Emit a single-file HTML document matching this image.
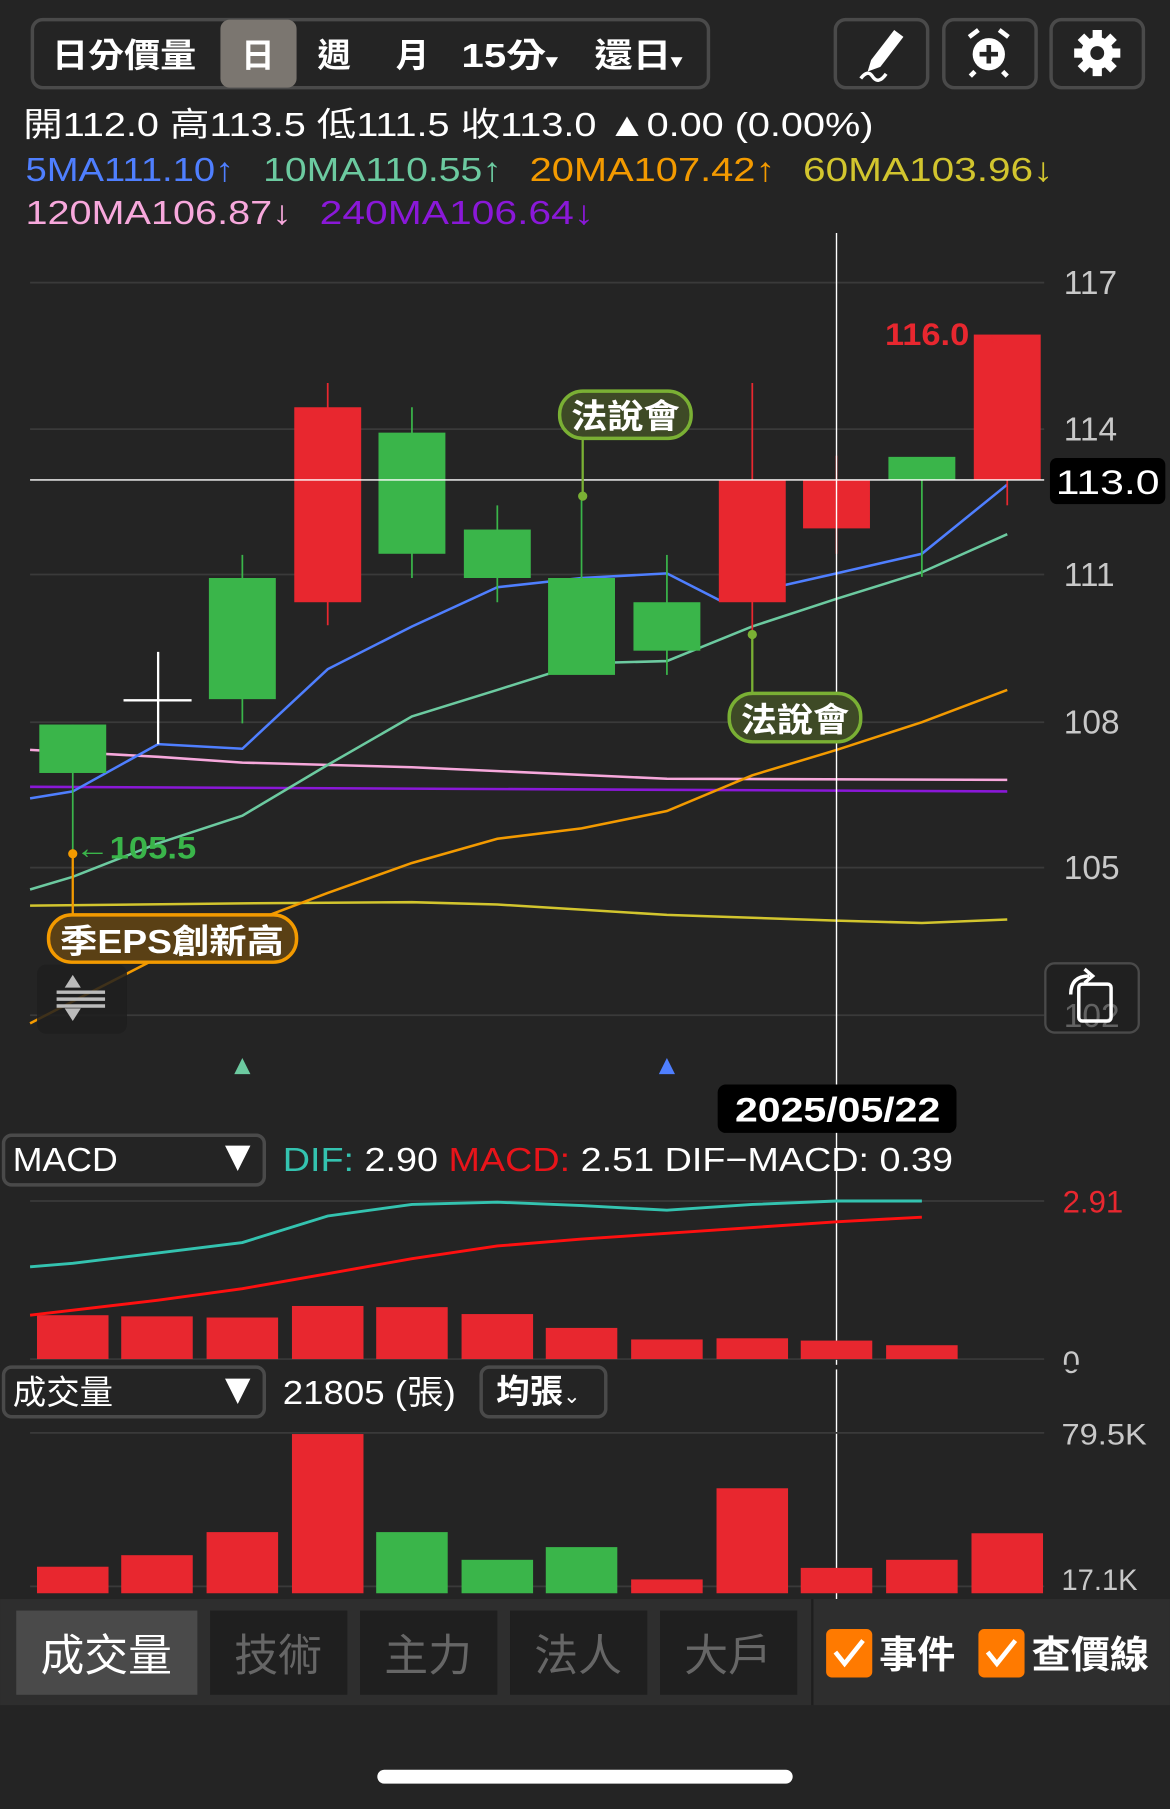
<!DOCTYPE html>
<html><head><meta charset="utf-8"><style>
html,body{margin:0;padding:0;background:#242424;width:1170px;height:1809px;overflow:hidden}
svg{display:block}
text{font-family:"Liberation Sans","Noto Sans CJK TC",sans-serif}
</style></head><body>
<svg width="1170" height="1809" viewBox="0 0 1014 1568" xmlns="http://www.w3.org/2000/svg">
<rect width="1014" height="1568" fill="#242424"/>
<!-- toolbar -->
<rect x="28" y="17" width="586" height="59" rx="9" fill="none" stroke="#4a4a4a" stroke-width="3"/>
<rect x="191" y="17" width="66" height="59" rx="8" fill="#7b7670"/>
<g fill="#fff" font-size="29" font-weight="bold">
<text x="45" y="58" textLength="125" lengthAdjust="spacingAndGlyphs">日分價量</text>
<text x="209" y="58">日</text>
<text x="275" y="58">週</text>
<text x="343" y="58">月</text>
<text x="400" y="58" textLength="83" lengthAdjust="spacingAndGlyphs">15分<tspan font-size="16">▾</tspan></text>
<text x="515" y="58" textLength="76" lengthAdjust="spacingAndGlyphs">還日<tspan font-size="16">▾</tspan></text>
</g>
<g fill="none" stroke="#4a4a4a" stroke-width="3">
<rect x="724" y="17" width="80" height="59" rx="9"/>
<rect x="818" y="17" width="80" height="59" rx="9"/>
<rect x="911" y="17" width="80" height="59" rx="9"/>
</g>
<path d="M755 52 L775 26 L783 32 L763 58 L752 62 Z" fill="#fff"/>
<path d="M746 68 q6 -8 10 -2 q5 8 12 -2" fill="none" stroke="#fff" stroke-width="3"/>
<circle cx="857" cy="47" r="14" fill="#fff"/>
<path d="M840 32 l8 -6 M874 32 l-8 -6 M845 62 l-4 4 M869 62 l4 4" stroke="#fff" stroke-width="4"/>
<path d="M857 39 v16 M849 47 h16" stroke="#242424" stroke-width="4"/>
<g transform="translate(951,46)">
<circle r="14" fill="#fff"/>
<g fill="#fff"><rect x="-4" y="-20" width="8" height="40"/><rect x="-4" y="-20" width="8" height="40" transform="rotate(45)"/><rect x="-4" y="-20" width="8" height="40" transform="rotate(90)"/><rect x="-4" y="-20" width="8" height="40" transform="rotate(135)"/></g>
<circle r="6" fill="#242424"/>
</g>
<!-- OHLC -->
<text x="20" y="118" fill="#fff" font-size="29" textLength="737" lengthAdjust="spacingAndGlyphs">開112.0 高113.5 低111.5 收113.0 ▲0.00 (0.00%)</text>
<g font-size="29">
<text x="22" y="157" fill="#4f7fff" textLength="181" lengthAdjust="spacingAndGlyphs">5MA111.10↑</text>
<text x="228" y="157" fill="#6ccaa0" textLength="207" lengthAdjust="spacingAndGlyphs">10MA110.55↑</text>
<text x="459" y="157" fill="#f39a00" textLength="213" lengthAdjust="spacingAndGlyphs">20MA107.42↑</text>
<text x="696" y="157" fill="#d2c52e" textLength="217" lengthAdjust="spacingAndGlyphs">60MA103.96↓</text>
<text x="22" y="194" fill="#f7a8dc" textLength="231" lengthAdjust="spacingAndGlyphs">120MA106.87↓</text>
<text x="277" y="194" fill="#8a18d8" textLength="238" lengthAdjust="spacingAndGlyphs">240MA106.64↓</text>
</g>
<!-- grid -->
<g stroke="#3a3a3a" stroke-width="1.5">
<line x1="26" y1="245" x2="905" y2="245"/><line x1="26" y1="372" x2="905" y2="372"/><line x1="26" y1="498" x2="905" y2="498"/><line x1="26" y1="626" x2="905" y2="626"/><line x1="26" y1="752" x2="905" y2="752"/><line x1="26" y1="880" x2="905" y2="880"/>
</g>
<g fill="#c8c8c8" font-size="29">
<text x="922" y="255">117</text><text x="922" y="382">114</text><text x="922" y="508">111</text><text x="922" y="636">108</text><text x="922" y="762">105</text><text x="922" y="890">102</text>
</g>
<g fill="none" stroke-width="2.2">
<polyline stroke="#d2c52e" points="26,785 210,783 357,782 431,784 578,793 725,798 799,800 873,797"/>
<polyline stroke="#f7a8dc" points="26,650 137,656 210,661 357,665 578,675 873,676"/>
<polyline stroke="#8a18d8" points="26,682 873,686"/>
<polyline stroke="#f39a00" points="26,887 137,830 210,802 284,774 357,748 431,727 504,718 578,703 652,672 725,650 799,626 873,598"/>
<polyline stroke="#6ccaa0" points="26,771 63,760 137,731 210,707 284,663 357,621 431,598 504,575 578,573 652,543 725,519 799,496 873,463"/>
<polyline stroke="#4f7fff" points="26,692 63,686 137,645 210,649 284,580 357,543 431,509 504,501 578,497 623,520 725,497 799,480 873,420"/>
</g>
<g stroke-width="1.5">
<line x1="63" y1="628" x2="63" y2="740" stroke="#3ab54a"/><rect x="34" y="628" width="58" height="42" fill="#3ab54a"/>
<line x1="107" y1="607" x2="166" y2="607" stroke="#fff" stroke-width="2"/><line x1="137" y1="565" x2="137" y2="645" stroke="#fff" stroke-width="2"/>
<line x1="210" y1="481" x2="210" y2="627" stroke="#3ab54a"/><rect x="181" y="501" width="58" height="105" fill="#3ab54a"/>
<line x1="284" y1="332" x2="284" y2="542" stroke="#e8272f"/><rect x="255" y="353" width="58" height="169" fill="#e8272f"/>
<line x1="357" y1="353" x2="357" y2="501" stroke="#3ab54a"/><rect x="328" y="375" width="58" height="105" fill="#3ab54a"/>
<line x1="431" y1="438" x2="431" y2="522" stroke="#3ab54a"/><rect x="402" y="459" width="58" height="42" fill="#3ab54a"/>
<line x1="504" y1="430" x2="504" y2="501" stroke="#3ab54a"/><rect x="475" y="501" width="58" height="84" fill="#3ab54a"/>
<line x1="578" y1="481" x2="578" y2="585" stroke="#3ab54a"/><rect x="549" y="522" width="58" height="42" fill="#3ab54a"/>
<line x1="652" y1="332" x2="652" y2="550" stroke="#e8272f"/><rect x="623" y="416" width="58" height="106" fill="#e8272f"/>
<line x1="725" y1="395" x2="725" y2="480" stroke="#e8272f"/><rect x="696" y="416" width="58" height="42" fill="#e8272f"/>
<line x1="799" y1="416" x2="799" y2="500" stroke="#3ab54a"/><rect x="770" y="396" width="58" height="20" fill="#3ab54a"/>
<line x1="873" y1="416" x2="873" y2="438" stroke="#e8272f"/><rect x="844" y="290" width="58" height="126" fill="#e8272f"/>
</g>
<text x="767" y="299" fill="#e8272f" font-size="27" font-weight="bold" textLength="103" lengthAdjust="spacingAndGlyphs">116.0→</text>
<text x="65" y="744" fill="#3ab54a" font-size="27" font-weight="bold" textLength="105" lengthAdjust="spacingAndGlyphs">←105.5</text>
<line x1="26" y1="416" x2="905" y2="416" stroke="#fff" stroke-width="1.2"/>
<line x1="725" y1="202" x2="725" y2="1386" stroke="#fff" stroke-width="1.2"/>
<rect x="910" y="397" width="100" height="40" rx="6" fill="#000"/>
<text x="915" y="428" fill="#fff" font-size="30" textLength="90" lengthAdjust="spacingAndGlyphs">113.0</text>
<!-- events -->
<line x1="505" y1="380" x2="505" y2="430" stroke="#7ab034" stroke-width="2"/><circle cx="505" cy="430" r="4" fill="#7ab034"/>
<rect x="485" y="339" width="114" height="41" rx="20" fill="#3e4a26" stroke="#7ab034" stroke-width="3"/>
<text x="495" y="371" fill="#fff" font-size="29" font-weight="bold" textLength="94" lengthAdjust="spacingAndGlyphs">法說會</text>
<line x1="652" y1="550" x2="652" y2="601" stroke="#7ab034" stroke-width="2"/><circle cx="652" cy="550" r="4" fill="#7ab034"/>
<rect x="632" y="601" width="114" height="42" rx="20" fill="#3e4a26" stroke="#7ab034" stroke-width="3"/>
<text x="642" y="634" fill="#fff" font-size="29" font-weight="bold" textLength="94" lengthAdjust="spacingAndGlyphs">法說會</text>
<line x1="63" y1="740" x2="63" y2="793" stroke="#f39a00" stroke-width="2"/><circle cx="63" cy="740" r="4" fill="#f39a00"/>
<rect x="42" y="793" width="215" height="41" rx="20" fill="#5a4015" stroke="#f39a00" stroke-width="3"/>
<text x="52" y="826" fill="#fff" font-size="29" font-weight="bold" textLength="194" lengthAdjust="spacingAndGlyphs">季EPS創新高</text>
<rect x="32" y="836" width="78" height="60" rx="8" fill="#1e1e1e" opacity="0.85"/>
<path d="M56 856 L70 856 L63 845 Z M56 874 L70 874 L63 885 Z" fill="#bbb"/>
<path d="M49 860 h42 M49 866 h42 M49 872 h42" stroke="#bbb" stroke-width="3"/>
<rect x="906" y="835" width="81" height="60" rx="8" fill="#1e1e1e" fill-opacity="0.6" stroke="#4a4a4a" stroke-width="2"/>
<rect x="935" y="853" width="28" height="32" rx="3" fill="none" stroke="#fff" stroke-width="3"/>
<path d="M928 862 q0 -16 16 -16" fill="none" stroke="#fff" stroke-width="3"/><path d="M940 840 l7 6 -7 6" fill="none" stroke="#fff" stroke-width="3"/>
<path d="M203 931 L217 931 L210 917 Z" fill="#6ccaa0"/>
<path d="M571 931 L585 931 L578 917 Z" fill="#4f7fff"/>
<rect x="622" y="940" width="207" height="42" rx="7" fill="#000"/>
<text x="637" y="972" fill="#fff" font-size="30" font-weight="bold" textLength="178" lengthAdjust="spacingAndGlyphs">2025/05/22</text>
<!-- MACD -->
<rect x="3" y="984" width="226" height="43" rx="7" fill="none" stroke="#4a4a4a" stroke-width="3"/>
<text x="11" y="1015" fill="#fff" font-size="29" textLength="91" lengthAdjust="spacingAndGlyphs">MACD</text>
<path d="M195 993 L217 993 L206 1015 Z" fill="#fff"/>
<text x="245" y="1015" font-size="29" textLength="581" lengthAdjust="spacingAndGlyphs"><tspan fill="#34c3b0">DIF:</tspan><tspan fill="#fff"> 2.90   </tspan><tspan fill="#e8141a">MACD:</tspan><tspan fill="#fff"> 2.51   DIF−MACD: 0.39</tspan></text>
<line x1="26" y1="1041" x2="905" y2="1041" stroke="#3a3a3a" stroke-width="1.5"/>
<line x1="26" y1="1178" x2="905" y2="1178" stroke="#3a3a3a" stroke-width="1.5"/>
<text x="921" y="1051" fill="#e8272f" font-size="27">2.91</text>
<text x="921" y="1190" fill="#c8c8c8" font-size="27">0</text>
<g fill="#e8272f">
<rect x="32" y="1140" width="62" height="38"/><rect x="105" y="1141" width="62" height="37"/><rect x="179" y="1142" width="62" height="36"/><rect x="253" y="1132" width="62" height="46"/><rect x="326" y="1133" width="62" height="45"/><rect x="400" y="1139" width="62" height="39"/><rect x="473" y="1151" width="62" height="27"/><rect x="547" y="1161" width="62" height="17"/><rect x="621" y="1160" width="62" height="18"/><rect x="694" y="1162" width="62" height="16"/><rect x="768" y="1166" width="62" height="12"/>
</g>
<polyline fill="none" stroke="#34c3b0" stroke-width="2.5" points="26,1098 63,1095 137,1086 210,1077 284,1054 357,1044 431,1042 504,1045 578,1049 652,1044 725,1041 799,1041"/>
<polyline fill="none" stroke="#ff1010" stroke-width="2.5" points="26,1140 137,1127 210,1117 284,1104 357,1091 431,1080 504,1074 578,1069 652,1064 725,1059 799,1055"/>
<!-- Volume -->
<rect x="0" y="1183" width="1014" height="4" fill="#242424"/>
<rect x="3" y="1185" width="226" height="43" rx="7" fill="none" stroke="#4a4a4a" stroke-width="3"/>
<text x="11" y="1217" fill="#fff" font-size="29">成交量</text>
<path d="M195 1195 L217 1195 L206 1217 Z" fill="#fff"/>
<text x="245" y="1217" fill="#fff" font-size="29" textLength="150" lengthAdjust="spacingAndGlyphs">21805 (張)</text>
<rect x="417" y="1185" width="108" height="43" rx="7" fill="none" stroke="#4a4a4a" stroke-width="3"/>
<text x="430" y="1216" fill="#fff" font-size="29" font-weight="bold">均張<tspan font-size="18" font-weight="normal">⌄</tspan></text>
<line x1="26" y1="1242" x2="905" y2="1242" stroke="#3a3a3a" stroke-width="1.5"/>
<line x1="26" y1="1375" x2="905" y2="1375" stroke="#3a3a3a" stroke-width="1.5"/>
<text x="920" y="1252" fill="#c8c8c8" font-size="26" textLength="74" lengthAdjust="spacingAndGlyphs">79.5K</text>
<text x="920" y="1378" fill="#c8c8c8" font-size="26" textLength="66" lengthAdjust="spacingAndGlyphs">17.1K</text>
<rect x="32" y="1358" width="62" height="23" fill="#e8272f"/>
<rect x="105" y="1348" width="62" height="33" fill="#e8272f"/>
<rect x="179" y="1328" width="62" height="53" fill="#e8272f"/>
<rect x="253" y="1243" width="62" height="138" fill="#e8272f"/>
<rect x="326" y="1328" width="62" height="53" fill="#3ab54a"/>
<rect x="400" y="1352" width="62" height="29" fill="#3ab54a"/>
<rect x="473" y="1341" width="62" height="40" fill="#3ab54a"/>
<rect x="547" y="1369" width="62" height="12" fill="#e8272f"/>
<rect x="621" y="1290" width="62" height="91" fill="#e8272f"/>
<rect x="694" y="1359" width="62" height="22" fill="#e8272f"/>
<rect x="768" y="1352" width="62" height="29" fill="#e8272f"/>
<rect x="842" y="1329" width="62" height="52" fill="#e8272f"/>
<!-- bottom bar -->
<rect x="0" y="1386" width="1014" height="92" fill="#2e2e2e"/>
<rect x="14" y="1396" width="157" height="73" fill="#4a4a4a"/>
<rect x="182" y="1396" width="119" height="73" fill="#1f1f1f"/>
<rect x="312" y="1396" width="119" height="73" fill="#1f1f1f"/>
<rect x="442" y="1396" width="119" height="73" fill="#1f1f1f"/>
<rect x="572" y="1396" width="119" height="73" fill="#1f1f1f"/>
<line x1="704" y1="1386" x2="704" y2="1478" stroke="#1e1e1e" stroke-width="2"/>
<text x="92" y="1448" fill="#fff" font-size="38" text-anchor="middle">成交量</text>
<g fill="#666" font-size="38" text-anchor="middle">
<text x="241" y="1448">技術</text><text x="371" y="1448">主力</text><text x="501" y="1448">法人</text><text x="631" y="1448">大戶</text>
</g>
<rect x="716" y="1412" width="40" height="42" rx="5" fill="#ff7a00"/>
<path d="M724 1432 l8 10 l16 -20" fill="none" stroke="#fff" stroke-width="4"/>
<text x="762" y="1446" fill="#fff" font-size="33" font-weight="bold">事件</text>
<rect x="848" y="1412" width="40" height="42" rx="5" fill="#ff7a00"/>
<path d="M856 1432 l8 10 l16 -20" fill="none" stroke="#fff" stroke-width="4"/>
<text x="894" y="1446" fill="#fff" font-size="33" font-weight="bold" textLength="102" lengthAdjust="spacingAndGlyphs">查價線</text>
<rect x="327" y="1534" width="360" height="12" rx="6" fill="#fff"/>
</svg>
</body></html>
